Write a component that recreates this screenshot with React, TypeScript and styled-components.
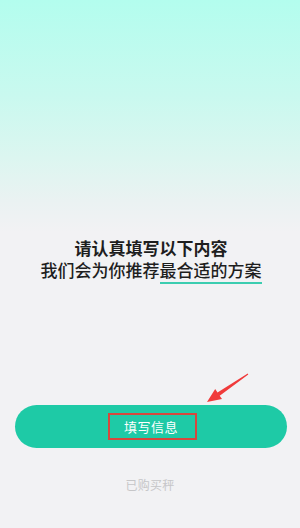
import React from "react";
import styled, { createGlobalStyle } from "styled-components";

const GlobalStyle = createGlobalStyle`
  html, body {
    margin: 0;
    padding: 0;
    background: #f2f2f4;
  }
  body {
    font-family: "Noto Sans CJK SC", "Noto Sans", sans-serif;
  }
`;

export default function App() {
  return (
    <>
      <GlobalStyle />
      <Page>
        <Intro>
          <Title>请认真填写以下内容</Title>
          <Subtitle>
            我们会为你推荐<Highlight>最合适的方案</Highlight>
          </Subtitle>
        </Intro>
        <Actions>
          <FillButton>
            <Marked>填写信息</Marked>
          </FillButton>
          <Purchased>已购买秤</Purchased>
        </Actions>
        <Pointer viewBox="0 0 300 528" aria-hidden="true">
          <polygon
            points="248.3,374.4 219.7,395.8 222,399.1 207,402 215.2,389.1 217.5,392.4 247.7,373.6"
            fill="#f03b3b"
          />
        </Pointer>
      </Page>
    </>
  );
}

const Page = styled.div`
  position: relative;
  height: 528px;
  overflow: hidden;
  display: flex;
  flex-direction: column;
  background: linear-gradient(
    180deg,
    #b3fdee 0%,
    #c9f9ef 18%,
    #dcf6f0 30%,
    #eaf2f2 38%,
    #f2f2f4 44%,
    #f2f2f4 100%
  );
`;

const Intro = styled.div`
  padding-top: 237px;
  text-align: center;
  font-size: 17px;
  line-height: 22px;
  color: #1e1e1e;
  padding-left: 2px;
`;

const Title = styled.div`
  font-weight: 700;
`;

const Subtitle = styled.div`
  font-weight: 500;
`;

const Highlight = styled.span`
  border-bottom: 2px solid #3ccdb0;
`;

const Actions = styled.div`
  margin-top: 124px;
  display: flex;
  flex-direction: column;
  align-items: center;
`;

const FillButton = styled.button`
  width: 272px;
  height: 43px;
  margin-left: 2px;
  border: none;
  border-radius: 22px;
  background: #1ecaa6;
  display: flex;
  align-items: center;
  justify-content: center;
  padding: 0;
  font-family: inherit;
`;

const Marked = styled.span`
  box-sizing: border-box;
  width: 89px;
  height: 27px;
  margin-left: 3px;
  padding-right: 3px;
  border: 2px solid #d5473d;
  display: flex;
  align-items: center;
  justify-content: center;
  color: #ffffff;
  font-size: 13px;
  letter-spacing: 0.5px;
`;

const Purchased = styled.div`
  margin-top: 27px;
  font-size: 12px;
  line-height: 20px;
  letter-spacing: 0.3px;
  color: #c6c6c8;
`;

const Pointer = styled.svg`
  position: absolute;
  left: 0;
  top: 0;
  width: 300px;
  height: 528px;
  pointer-events: none;
`;
